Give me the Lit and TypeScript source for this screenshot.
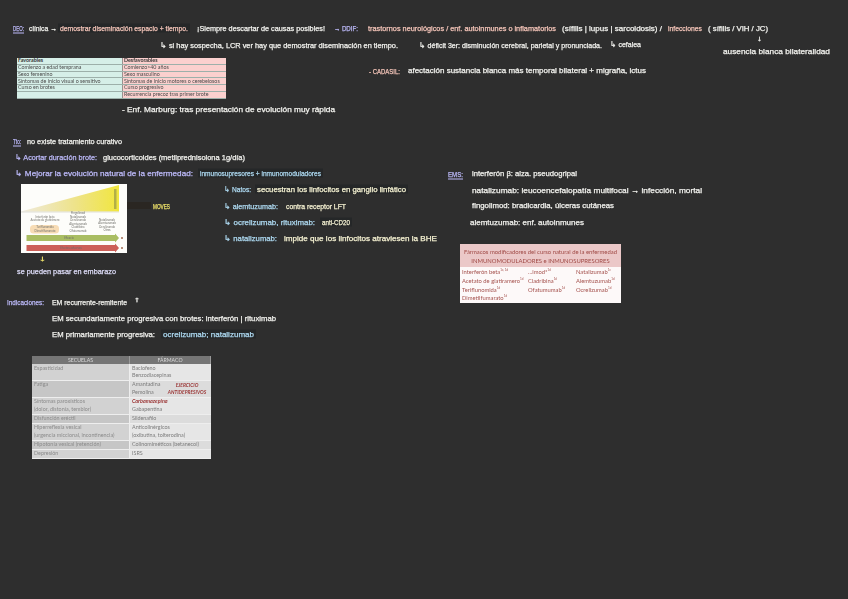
import { LitElement, html, svg, css } from "lit";
import { customElement } from "lit/decorators.js";

const W = "#f2f2ee", P = "#f6c6ba", L = "#bdbafa", B = "#aedaf2", C = "#f6f2d2", Y = "#f0e36a";
// x1, x2, vertical centre, text, colour, dark highlight behind, underline
type N = [number, number, number, string, string, boolean?, boolean?];
const notes: N[] = [
  [13, 24, 28, "DEO:", L, false, true],
  [29, 57, 28, "clínica →", W],
  [60, 188, 28, "demostrar diseminación espacio + tiempo.", P, true],
  [197, 325, 28, "¡Siempre descartar de causas posibles!", W],
  [334, 358, 28, "→ DDIF:", L],
  [368, 556, 28, "trastornos neurológicos / enf. autoinmunes o inflamatorios", P],
  [562, 662, 28, "(sífilis | lupus | sarcoidosis) /", W],
  [668, 702, 28, "infecciones", P],
  [708, 768, 28, "( sífilis / VIH / JC)", W],
  [757, 762, 38, "↓", W],
  [160, 398, 45, "↳ si hay sospecha, LCR ver hay que demostrar diseminación en tiempo.", W],
  [419, 602, 45, "↳ déficit 3er: disminución cerebral, parietal y pronunciada.", W],
  [610, 641, 44, "↳ cefalea", W],
  [723, 830, 51, "ausencia blanca bilateralidad", W],
  [369, 400, 71, "- CADASIL:", P],
  [408, 646, 70, "afectación sustancia blanca más temporal bilateral + migraña, ictus", W],
  [122, 335, 109, "- Enf. Marburg: tras presentación de evolución muy rápida", W],
  [13, 21, 141, "Tto:", L, false, true],
  [27, 122, 141, "no existe tratamiento curativo", W],
  [15, 97, 157, "↳ Acortar duración brote:", L],
  [103, 245, 157, "glucocorticoides (metilprednisolona 1g/día)", W],
  [15, 193, 173, "↳ Mejorar la evolución natural de la enfermedad:", L],
  [200, 321, 173, "inmunosupresores + inmunomoduladores", B, true],
  [224, 251, 189, "↳ Natos:", B],
  [257, 406, 189, "secuestran los linfocitos en ganglio linfático", C, true],
  [224, 278, 206, "↳ alemtuzumab:", B],
  [286, 346, 206, "contra receptor LFT", C],
  [224, 315, 222, "↳ ocrelizumab, rituximab:", B],
  [322, 350, 222, "anti-CD20", C, true],
  [224, 277, 238, "↳ natalizumab:", B],
  [284, 437, 238, "impide que los linfocitos atraviesen la BHE", C],
  [153, 170, 206, "MOVES", Y],
  [39, 46, 258, "↓", Y],
  [17, 116, 271, "se pueden pasar en embarazo", "#dfdefa"],
  [448, 463, 174, "EMS:", L, false, true],
  [472, 577, 173, "interferón β: alza. pseudogripal", W],
  [472, 702, 190, "natalizumab: leucoencefalopatía multifocal → infección, mortal", W],
  [472, 614, 205, "fingolimod: bradicardia, úlceras cutáneas", W],
  [470, 584, 222, "alemtuzumab: enf. autoinmunes", W],
  [7, 44, 302, "Indicaciones:", L],
  [52, 127, 302, "EM recurrente-remitente", W],
  [134, 140, 299, "↑", W],
  [52, 276, 318, "EM secundariamente progresiva con brotes: interferón | rituximab", W],
  [52, 155, 334, "EM primariamente progresiva:", W],
  [163, 254, 334, "ocrelizumab; natalizumab", B, true],
];

const fav: [string, string][] = [
  ["Favorables", "Desfavorables"],
  ["Comienzo a edad temprana", "Comienzo>40 años"],
  ["Sexo femenino", "Sexo masculino"],
  ["Síntomas de inicio visual o sensitivo", "Síntomas de inicio motores o cerebelosos"],
  ["Curso en brotes", "Curso progresivo"],
  ["", "Recurrencia precoz tras primer brote"],
];

const sec: [string[], string[], number][] = [
  [["Espasticidad"], ["Baclofeno", "Benzodiacepinas"], 0],
  [["Fatiga"], ["Amantadina", "Pemolina"], 1],
  [["Síntomas paroxísticos", "(dolor, distonía, temblor)"], ["CARB", "Gabapentina"], 0],
  [["Disfunción eréctil"], ["Sildenafilo"], 1],
  [["Hiperreflexia vesical", "(urgencia miccional, incontinencia)"], ["Anticolinérgicos", "(oxibutina, tolterodina)"], 0],
  [["Hipotonía vesical (retención)"], ["Colinomiméticos (betanecol)"], 1],
  [["Depresión"], ["ISRS"], 0],
];

@customElement("app-root")
export class AppRoot extends LitElement {
  static styles = css`
    :host { display: block; width: 848px; height: 599px; }
    .canvas { position: relative; width: 848px; height: 599px; background: #2e2e2e; overflow: hidden; }
    .notes { position: absolute; inset: 0; filter: blur(0.5px); }
    .notes text { font-family: "Liberation Sans", sans-serif; font-size: 7.5px; stroke-width: 0.25px; }
    table { border-collapse: collapse; table-layout: fixed; font-family: Lato, sans-serif; }
    .fav { position: absolute; left: 17px; top: 58px; width: 209px; height: 41px; font-size: 5.3px; color: #4a4a4a; filter: blur(0.4px); }
    .fav td { height: 5.8px; padding: 0 0 0 1px; line-height: 5.8px; white-space: nowrap; overflow: hidden; border-bottom: 1px solid #9db0aa; }
    .fav .a { width: 104px; background: #d6efe8; }
    .fav .b { background: #fbd0ce; border-left: 1px solid #99928f; }
    .fav .h { font-weight: 700; color: #333; }
    .sec { position: absolute; left: 32px; top: 356px; width: 179px; height: 103px; font-size: 5.4px; color: #858585; filter: blur(0.45px); }
    .sec th { height: 8px; background: #757575; color: #d8d8d8; font-size: 5.2px; font-weight: 400; padding: 0; border-right: 1px solid #999; }
    .sec th.s1 { width: 97px; }
    .sec td { padding: 0.5px 0 0 2px; line-height: 7.6px; vertical-align: top; border-bottom: 1px solid #eee; white-space: nowrap; position: relative; }
    .sec .l { background: #d2d2d2; border-right: 1px solid #eee; color: #8b8b8b; }
    .sec .r { background: #e6e6e6; color: #7c7c7c; }
    .sec .alt .l { background: #c6c6c6; }
    .sec .alt .r { background: #dcdcdc; }
    .red { color: #9c3838; font-weight: 700; font-style: italic; }
    .ex { position: absolute; left: 36px; top: 1px; line-height: 7.6px; font-size: 4.9px; text-align: center; width: 42px; }
    .mod { position: absolute; left: 460px; top: 244px; width: 161px; height: 59px; background: #fdf9f9; color: #a5524e; font-family: Lato, sans-serif; font-size: 5.8px; filter: blur(0.4px); }
    .head { height: 23px; background: #ebc8c8; text-align: center; font-size: 5.9px; line-height: 9px; padding-top: 3px; box-sizing: border-box; color: #a04a46; white-space: nowrap; }
    .grid { display: grid; grid-template-columns: 66px 48px 1fr; padding: 1px 0 0 2px; row-gap: 1.8px; line-height: 7px; white-space: nowrap; }
    sup { font-size: 3px; line-height: 0; }
    .fig { position: absolute; left: 21px; top: 184px; width: 106px; height: 69px; filter: blur(0.5px); }
    .fig text { font-family: Lato, sans-serif; font-size: 2.9px; fill: #6f6f6a; text-anchor: middle; }
  `;

  render() {
    return html`<div class="canvas">
      <svg class="notes" width="848" height="599" viewBox="0 0 848 599">
        <rect x="127" y="202" width="24" height="7" fill="#2a2622"></rect>
        ${notes.map(([x1, x2, y, t, c, hl, ul]) => svg`
          ${hl ? svg`<rect x=${x1 - 2} y=${y - 4.5} width=${x2 - x1 + 4} height="9" fill="#252728"></rect>` : ""}
          <text x=${x1} y=${y + 2.8} fill=${c} stroke=${c} textLength=${x2 - x1} lengthAdjust="spacingAndGlyphs">${t}</text>
          ${ul ? svg`<line x1=${x1} x2=${x2} y1=${y + 5} y2=${y + 5} stroke=${c} stroke-width="1"></line>` : ""}
        `)}
      </svg>

      <table class="fav">
        ${fav.map((r, i) => html`<tr class=${i === 0 ? "h" : ""}><td class="a">${r[0]}</td><td class="b">${r[1]}</td></tr>`)}
      </table>

      <svg class="fig" width="106" height="69" viewBox="0 0 106 69">
        <defs>
          <linearGradient id="ty" x1="0" x2="1" y1="0" y2="0">
            <stop offset="0" stop-color="#efeadd"></stop>
            <stop offset="0.55" stop-color="#eee38a"></stop>
            <stop offset="1" stop-color="#f1e63e"></stop>
          </linearGradient>
        </defs>
        <rect width="106" height="69" fill="#fdfdfa"></rect>
        <polygon points="0,27.5 98,1 98,27.5" fill="url(#ty)"></polygon>
        <line x1="0" x2="98" y1="28" y2="28" stroke="#cfcfc4" stroke-width="0.6"></line>
        <rect x="93" y="5" width="2.5" height="20" fill="#8a8a4a" opacity="0.6"></rect>
        <rect x="9" y="41" width="29" height="8.5" rx="3.5" fill="#f7dcb5"></rect>
        <text x="24" y="33.5">Interferón beta</text>
        <text x="24" y="37">Acetato de glatirámero</text>
        <text x="24" y="44">Teriflunomida</text>
        <text x="24" y="47.5">Dimetilfumarato</text>
        <text x="57" y="30">Fingolimod</text>
        <text x="57" y="33.5">Natalizumab</text>
        <text x="57" y="37">Ocrelizumab</text>
        <text x="57" y="40.5">Alemtuzumab</text>
        <text x="57" y="44">Cladribina</text>
        <text x="57" y="47.5">Ofatumumab</text>
        <text x="86" y="36.5">Natalizumab</text>
        <text x="86" y="40">Alemtuzumab</text>
        <text x="86" y="43.5">Ocrelizumab</text>
        <text x="86" y="47">Otros</text>
        <polygon points="5.5,51 94,51 94,49.5 98,54 94,58.5 94,57 5.5,57" fill="#a9bd62"></polygon>
        <polygon points="5.5,61 94,61 94,59.5 98,64 94,68.5 94,67 5.5,67" fill="#cc5f58"></polygon>
        <text x="48" y="55">Eficacia</text>
        <text x="50" y="65">Efectos adversos</text>
        <circle cx="101" cy="54" r="1" fill="#a06a50"></circle>
        <circle cx="101" cy="64" r="1" fill="#a06a50"></circle>
      </svg>

      <div class="mod">
        <div class="head">Fármacos modificadores del curso natural de la enfermedad<br />INMUNOMODULADORES e INMUNOSUPRESORES</div>
        <div class="grid">
          <span>Interferón beta<sup>1c, 1d</sup></span><span>…imod*<sup>1d</sup></span><span>Natalizumab<sup>1c</sup></span>
          <span>Acetato de glatiramero<sup>1d</sup></span><span>Cladribina<sup>1d</sup></span><span>Alemtuzumab<sup>1d</sup></span>
          <span>Teriflunomida<sup>1d</sup></span><span>Ofatumumab<sup>1d</sup></span><span>Ocrelizumab<sup>1d</sup></span>
          <span>Dimetilfumarato<sup>1d</sup></span>
        </div>
      </div>

      <table class="sec">
        <tr><th class="s1">SECUELAS</th><th>FÁRMACO</th></tr>
        ${sec.map(([a, b, alt], i) => html`<tr class=${alt ? "alt" : ""}>
          <td class="l">${a.map((t) => html`${t}<br />`)}</td>
          <td class="r">
            ${b.map((t) => t === "CARB" ? html`<span class="red">Carbamazepina</span><br />` : html`${t}<br />`)}
            ${i === 1 ? html`<span class="red ex">EJERCICIO<br />ANTIDEPRESIVOS</span>` : ""}
          </td>
        </tr>`)}
      </table>
    </div>`;
  }
}
